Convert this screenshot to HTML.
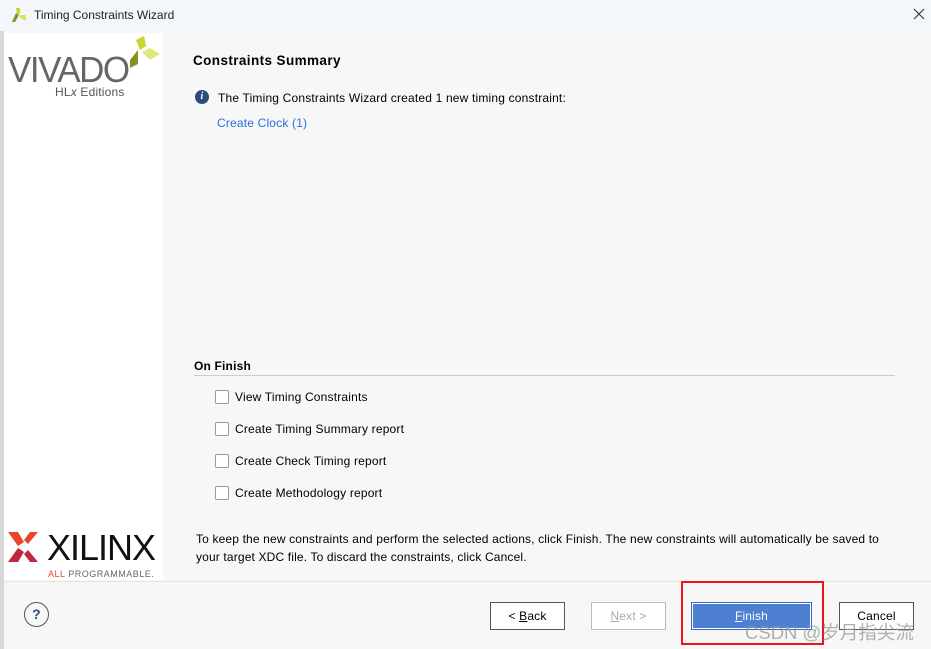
<!DOCTYPE html>
<html><head><meta charset="utf-8"><style>
*{margin:0;padding:0;box-sizing:border-box}
body{width:931px;height:649px;overflow:hidden;background:#f7f7f7;font-family:"Liberation Sans",Arial,sans-serif;font-size:12px;color:#000;position:relative;letter-spacing:.18px}
.a{position:absolute}
.cb{position:absolute;left:215px;width:14px;height:14px;border:1px solid #999;background:#fff;border-radius:2px}
.lbl{position:absolute;left:235px}
.btn{position:absolute;top:602px;height:28px;border:1px solid #555;background:#fff;text-align:center;line-height:26px;font-size:12px}
</style></head><body>
<div class="a" style="left:0;top:0;width:931px;height:31px;background:#f3f6fb"></div>
<svg class="a" style="left:11px;top:7px" width="16" height="16" viewBox="0 0 16 16"><polygon points="1,15 5,6 8,8 4,15" fill="#8a8f1e"/><polygon points="5,1 9,1 9,7 6,7" fill="#c8d62a"/><polygon points="9,8 15,8 15,14 9,11" fill="#d8e45a"/></svg>
<div class="a" style="left:34px;top:8px;font-size:12px;color:#222;letter-spacing:0">Timing Constraints Wizard</div>
<svg class="a" style="left:913px;top:8px" width="12" height="12" viewBox="0 0 12 12"><path d="M1 1L11 11M11 1L1 11" stroke="#333" stroke-width="1.1"/></svg>
<div class="a" style="left:0;top:31px;width:4px;height:618px;background:#d8d8d8"></div>
<div class="a" style="left:4px;top:33px;width:159px;height:547px;background:#fff"></div>
<div class="a" style="left:8px;top:49px;font-size:36px;letter-spacing:-1.5px;color:#666;transform:scaleX(.97);transform-origin:left">VIVADO</div>
<svg class="a" style="left:128px;top:36px" width="32" height="32" viewBox="0 0 32 32"><polygon points="2,24 10,14 10,28 2,32" fill="#8a8f1e"/><polygon points="8,4 16,0 18,10 12,14" fill="#c8d62a"/><polygon points="14,16 22,12 32,18 22,24" fill="#dfe87a"/></svg>
<div class="a" style="left:55px;top:85px;font-size:12px;color:#555">HL<i>x</i> Editions</div>
<svg class="a" style="left:8px;top:532px" width="32" height="30" viewBox="0 0 32 30"><polygon points="0,0 10,0 16,10 10,14" fill="#e8452c"/><polygon points="0,30 10,30 16,20 10,16" fill="#c0283c"/><polygon points="22,0 30,0 20,12 16,8" fill="#e8452c"/><polygon points="22,30 30,30 20,18 16,22" fill="#c0283c"/></svg>
<div class="a" style="left:47px;top:527px;font-size:36px;color:#111;letter-spacing:-1px">XILINX</div>
<div class="a" style="left:48px;top:569px;font-size:9px;color:#666;letter-spacing:.5px"><span style="color:#e8452c">ALL</span> PROGRAMMABLE.</div>
<div class="a" style="left:193px;top:53px;font-size:13.5px;font-weight:bold;letter-spacing:.4px">Constraints Summary</div>
<div class="a" style="left:195px;top:90px;width:14px;height:14px;border-radius:50%;background:#2c4a7c;color:#fff;font-size:10px;font-weight:bold;font-style:italic;text-align:center;line-height:14px;font-family:'Liberation Serif',serif">i</div>
<div class="a" style="left:218px;top:91px">The Timing Constraints Wizard created 1 new timing constraint:</div>
<div class="a" style="left:217px;top:116px;color:#2a6de0">Create Clock (1)</div>
<div class="a" style="left:194px;top:359px;font-weight:bold">On Finish</div>
<div class="a" style="left:194px;top:375px;width:701px;height:1px;background:#ccc"></div>
<div class="cb" style="top:390px"></div><div class="lbl" style="top:390px">View Timing Constraints</div>
<div class="cb" style="top:422px"></div><div class="lbl" style="top:422px">Create Timing Summary report</div>
<div class="cb" style="top:454px"></div><div class="lbl" style="top:454px">Create Check Timing report</div>
<div class="cb" style="top:486px"></div><div class="lbl" style="top:486px">Create Methodology report</div>
<div class="a" style="left:196px;top:530px;line-height:18px;letter-spacing:.15px;white-space:nowrap">To keep the new constraints and perform the selected actions, click Finish. The new constraints will automatically be saved to<br>your target XDC file. To discard the constraints, click Cancel.</div>
<div class="a" style="left:4px;top:581px;width:927px;height:1px;background:#e4e4e4"></div>
<div class="a" style="left:24px;top:602px;width:25px;height:25px;border:1px solid #555;border-radius:50%;text-align:center;line-height:23px;color:#2c4a7c;font-weight:bold;font-size:14px">?</div>
<div class="btn" style="left:490px;width:75px">&lt; <u>B</u>ack</div>
<div class="btn" style="left:591px;width:75px;border-color:#bbb;color:#aaa"><u>N</u>ext &gt;</div>
<div class="btn" style="left:691px;width:121px;background:#4f7fd0;border:1px solid #3a67b8;color:#fff;box-shadow:inset 0 0 0 1px #fff"><u>F</u>inish</div>
<div class="btn" style="left:839px;width:75px">Cancel</div>
<div class="a" style="left:681px;top:581px;width:143px;height:64px;border:2px solid #e8141e"></div>
<div class="a" style="left:745px;top:619px;font-size:18.5px;color:rgba(150,150,150,.75);letter-spacing:0;font-family:'Liberation Sans','Noto Sans CJK SC',sans-serif">CSDN @岁月指尖流</div>
</body></html>
